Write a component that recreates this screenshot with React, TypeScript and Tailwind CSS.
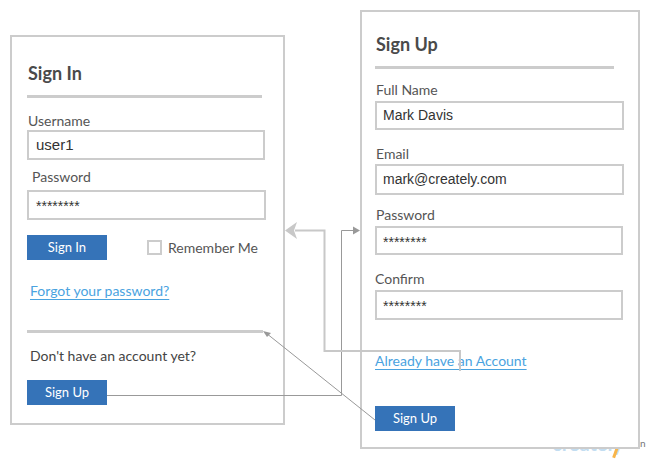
import React from "react";

const lato = { fontFamily: "Lato, 'Noto Sans', sans-serif" };
const arial = { fontFamily: "'Liberation Sans', Arial, sans-serif" };

function Field({ value, className = "" }: { value: string; className?: string }) {
  const stars = value.startsWith("*");
  return (
    <div
      className={`border-2 border-[#cccccc] bg-white flex px-[6px] text-[#333] ${
        stars ? "items-start pt-[4px] text-[14px] text-[#222]" : "items-center text-[14px]"
      } ${className}`}
      style={arial}
    >
      {value}
    </div>
  );
}

function Btn({ label }: { label: string }) {
  return (
    <div
      className="w-[80px] h-[25px] bg-[#3573b8] text-white text-[13px] flex items-center justify-center"
      style={lato}
    >
      {label}
    </div>
  );
}

export default function App() {
  return (
    <div className="relative w-[650px] h-[460px] bg-white overflow-hidden" style={lato}>
      {/* watermark behind panel */}
      <div className="absolute left-[552px] top-[431px] text-[20px] font-bold text-[#c3ddf1] leading-[24px]">
        creately
      </div>
      <div className="absolute left-[614px] top-[447px] w-[3px] h-[11px] bg-[#f8b54a] rotate-[20deg]" />
      <div className="absolute left-[640px] top-[437px] text-[10px] text-[#777] leading-[12px]">n</div>

      {/* Sign In panel */}
      <div className="absolute left-[10px] top-[35px] w-[275px] h-[390px] border-2 border-[#cccccc] bg-white pl-[15px] flex flex-col">
        <div className="mt-[26px] text-[18px] leading-[20px] font-bold text-[#4a4a4a] pl-[1px]">Sign In</div>
        <div className="mt-[12px] w-[235px] h-[3px] bg-[#cccccc]" />
        <div className="mt-[14px] text-[14px] leading-[18px] text-[#555] pl-[1px]">Username</div>
        <Field value="user1" className="w-[238px] h-[30px] text-[15px] pl-[7px]" />
        <div className="mt-[8px] text-[14px] leading-[18px] text-[#555] pl-[5px]">Password</div>
        <Field value="********" className="mt-[4px] w-[239px] h-[30px] pl-[7px]" />
        <div className="mt-[15px] flex items-center">
          <Btn label="Sign In" />
          <div className="ml-[40px] w-[15px] h-[15px] border-2 border-[#cccccc]" />
          <div className="ml-[6px] text-[14px] leading-[20px] text-[#555]">Remember Me</div>
        </div>
        <div className="mt-[21px] pl-[3px] text-[14px] leading-[20px] text-[#4aa3df] underline underline-offset-[3px]">
          Forgot your password?
        </div>
        <div className="mt-[29px] w-[236px] h-[3px] bg-[#cccccc]" />
        <div className="mt-[13px] pl-[3px] text-[14px] leading-[20px] text-[#444]">Don't have an account yet?</div>
        <div className="mt-[14px]">
          <Btn label="Sign Up" />
        </div>
      </div>

      {/* Sign Up panel */}
      <div className="absolute left-[360px] top-[10px] w-[280px] h-[439px] border-2 border-[#cccccc] bg-white pl-[13px] flex flex-col">
        <div className="mt-[22px] text-[18px] leading-[20px] font-bold text-[#4a4a4a] pl-[1px]">Sign Up</div>
        <div className="mt-[12px] w-[239px] h-[3px] bg-[#cccccc]" />
        <div className="mt-[12px] text-[14px] leading-[18px] text-[#555] pl-[1px]">Full Name</div>
        <Field value="Mark Davis" className="mt-[2px] w-[249px] h-[29px]" />
        <div className="mt-[15px] text-[14px] leading-[18px] text-[#555] pl-[1px]">Email</div>
        <Field value="mark@creately.com" className="mt-[1px] w-[249px] h-[31px]" />
        <div className="mt-[11px] text-[14px] leading-[18px] text-[#555] pl-[1px]">Password</div>
        <Field value="********" className="mt-[2px] w-[248px] h-[29px]" />
        <div className="mt-[15px] text-[14px] leading-[18px] text-[#555]">Confirm</div>
        <Field value="********" className="mt-[2px] w-[248px] h-[30px]" />
        <div className="mt-[31px] text-[14px] leading-[20px] text-[#4aa3df] underline underline-offset-[3px]">
          Already have an Account
        </div>
        <div className="mt-[35px]">
          <Btn label="Sign Up" />
        </div>
      </div>

      {/* connectors */}
      <svg className="absolute left-0 top-0 pointer-events-none" width="650" height="460">
        <polyline points="107,395.5 341.5,395.5 341.5,230.5 354,230.5" fill="none" stroke="#999" strokeWidth="1" />
        <polygon points="360,230.5 353,226.5 353,234.5" fill="#999" />
        <polyline points="460,371 460,351 324.5,351 324.5,230.5 295,230.5" fill="none" stroke="#c8c8c8" strokeWidth="2" />
        <polygon points="285,230.5 297,222 294,230.5 297,239" fill="#c8c8c8" />
        <line x1="375" y1="420" x2="266" y2="333" stroke="#999" strokeWidth="1" />
        <polygon points="263,331 271,333 267,337" fill="#999" />
      </svg>
    </div>
  );
}
